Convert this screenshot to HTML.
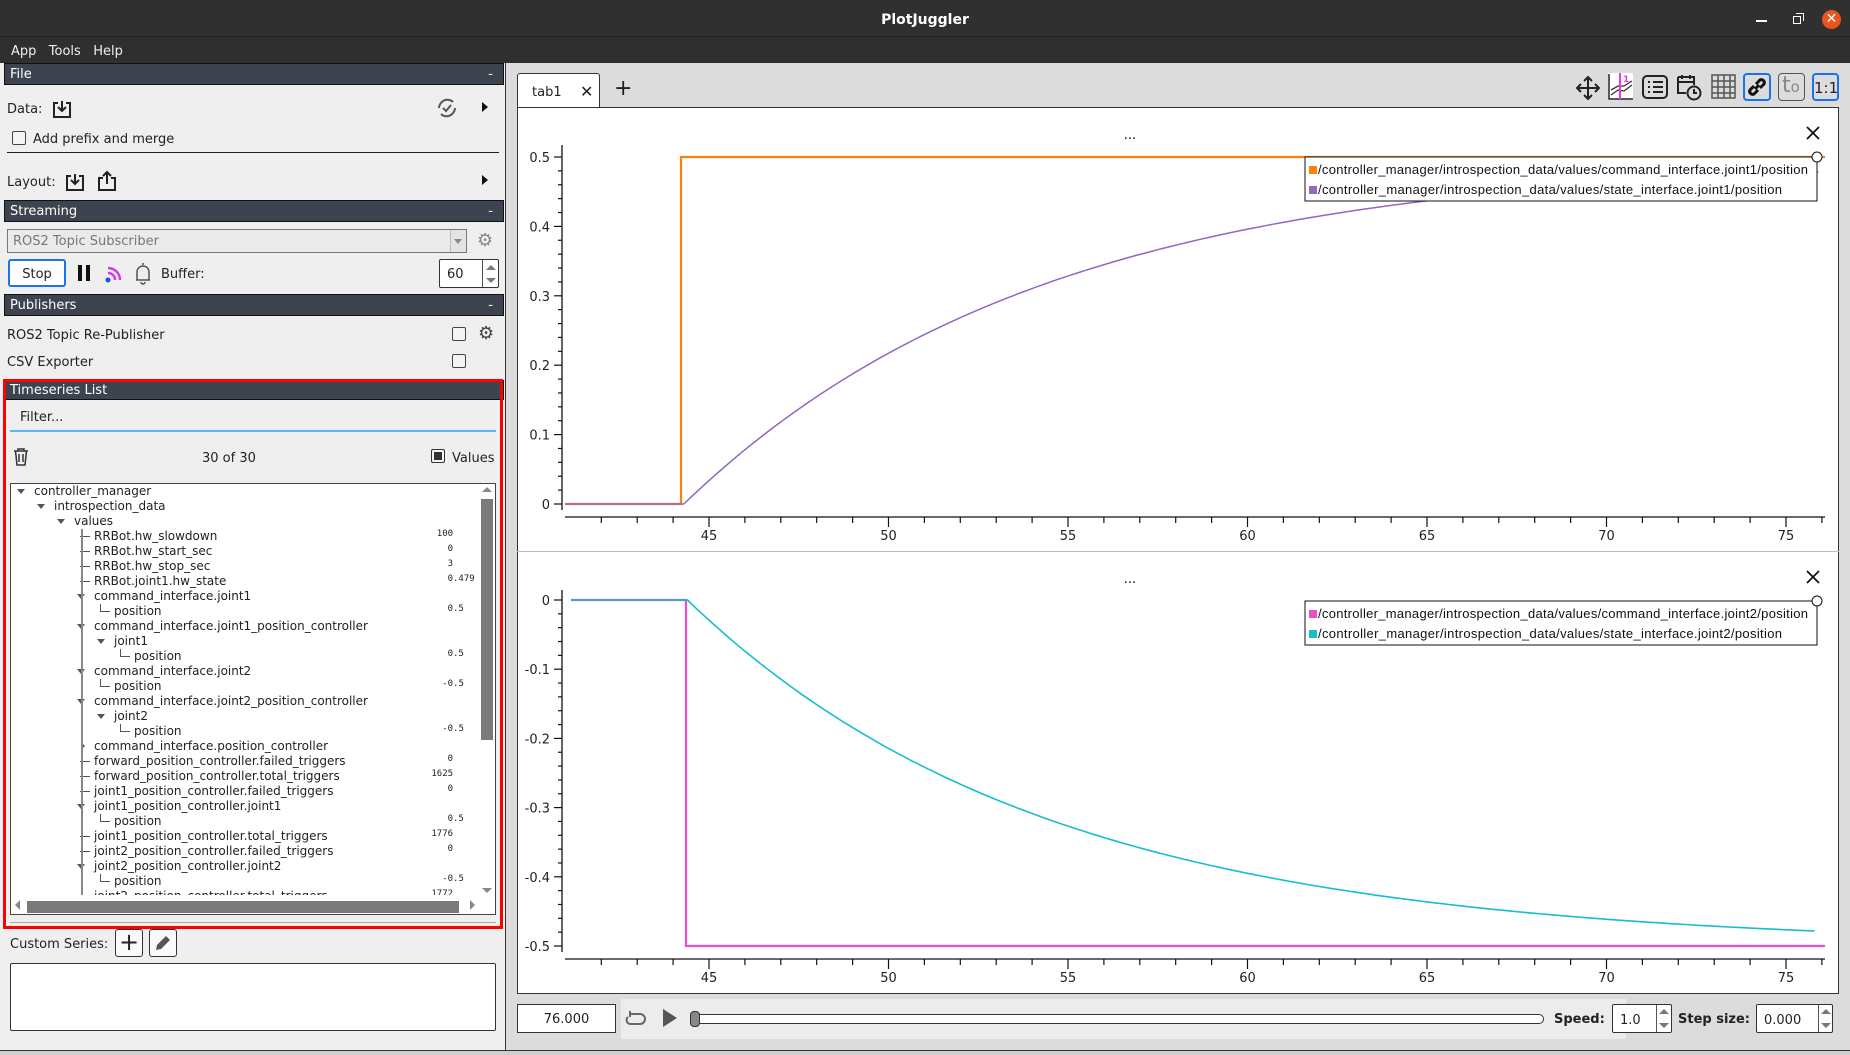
<!DOCTYPE html>
<html><head><meta charset="utf-8">
<style>
*{margin:0;padding:0;box-sizing:border-box}
body{width:1850px;height:1055px;overflow:hidden;position:relative;background:#dcdcdc;font-family:"DejaVu Sans","Liberation Sans",sans-serif;font-size:13px;color:#222}
.a{position:absolute}
.hdr{position:absolute;left:4px;width:500px;height:22px;background:#3d4450;color:#fff;border:1px solid #111;font-size:13px;line-height:22px;padding-left:5px}
.hdr span{position:absolute;right:10px;top:0}
.cb{position:absolute;width:14px;height:14px;border:1px solid #444;border-radius:2px;background:#f4f4f4}
.t{position:absolute;font-size:12px;white-space:nowrap;line-height:15px}
.v{position:absolute;font-family:"DejaVu Sans Mono",monospace;font-size:9px;line-height:15px;color:#222}
</style></head><body>
<!-- title bar -->
<div class="a" style="left:0;top:0;width:1850px;height:37px;background:#303030;border-bottom:1px solid #222"></div>
<div class="a" style="left:0;top:12px;width:1850px;text-align:center;color:#fff;font-weight:bold;font-size:14px">PlotJuggler</div>
<div class="a" style="left:1756px;top:20px;width:11px;height:2px;background:#fff"></div>
<div class="a" style="left:1793px;top:16px;width:8px;height:8px;border:1.5px solid #fff"></div>
<div class="a" style="left:1796px;top:13px;width:8px;height:8px;border-top:1.5px solid #fff;border-right:1.5px solid #fff"></div>
<div class="a" style="left:1822px;top:10px;width:19px;height:19px;border-radius:50%;background:#e95420;color:#fff;font-size:14px;line-height:19px;text-align:center;font-weight:bold">✕</div>
<!-- menu -->
<div class="a" style="left:0;top:37px;width:1850px;height:26px;background:#2f2f2f"></div>
<div class="a" style="left:11px;top:44px;color:#eee;font-size:13px;word-spacing:0">App&nbsp;&nbsp;&nbsp;Tools&nbsp;&nbsp;&nbsp;Help</div>
<!-- left panel -->
<div class="a" style="left:0;top:63px;width:506px;height:992px;background:#efefef;border-right:1px solid #333"></div>
<div class="hdr" style="top:63px">File<span>-</span></div>
<div class="a" style="left:7px;top:102px">Data:</div>
<svg class="a" style="left:52px;top:99px" width="20" height="20" viewBox="0 0 20 20" fill="none" stroke="#222" stroke-width="2"><path d="M6 4H2v14h16V4h-4M10 2v10M6 8l4 4 4-4"/></svg>
<svg class="a" style="left:436px;top:97px" width="22" height="22" viewBox="0 0 22 22" fill="none" stroke="#555" stroke-width="2"><path d="M5 6a8 8 0 0 1 12-1M17 16a8 8 0 0 1-12 1M3 11a8 8 0 0 1 2-5M19 11a8 8 0 0 1-2 5M7 11l3 3 5-6"/></svg>
<div class="a" style="left:482px;top:102px;width:0;height:0;border-left:6px solid #111;border-top:5px solid transparent;border-bottom:5px solid transparent"></div>
<div class="cb" style="left:12px;top:131px"></div>
<div class="a" style="left:33px;top:132px">Add prefix and merge</div>
<div class="a" style="left:7px;top:152px;width:492px;height:1px;background:#222"></div>
<div class="a" style="left:7px;top:175px">Layout:</div>
<svg class="a" style="left:65px;top:172px" width="20" height="20" viewBox="0 0 20 20" fill="none" stroke="#222" stroke-width="2"><path d="M6 4H2v14h16V4h-4M10 2v10M6 8l4 4 4-4"/></svg>
<svg class="a" style="left:97px;top:170px" width="20" height="22" viewBox="0 0 20 22" fill="none" stroke="#222" stroke-width="2"><path d="M6 8H2v12h16V8h-4M10 14V2M6 6l4-4 4 4"/></svg>
<div class="a" style="left:482px;top:175px;width:0;height:0;border-left:6px solid #111;border-top:5px solid transparent;border-bottom:5px solid transparent"></div>
<div class="hdr" style="top:200px">Streaming<span>-</span></div>
<div class="a" style="left:7px;top:229px;width:460px;height:24px;border:1px solid #777;background:#eaeaea;color:#777;padding-left:5px;line-height:24px">ROS2 Topic Subscriber</div>
<div class="a" style="left:450px;top:230px;width:16px;height:22px;border-left:1px solid #bbb;background:#e4e4e4"></div>
<div class="a" style="left:454px;top:239px;border-top:5px solid #888;border-left:4px solid transparent;border-right:4px solid transparent"></div>
<div class="a" style="left:477px;top:230px;color:#888;font-size:18px">⚙</div>
<div class="a" style="left:8px;top:259px;width:58px;height:28px;border:2px solid #1a73e8;border-radius:3px;background:#fff;text-align:center;line-height:27px">Stop</div>
<div class="a" style="left:78px;top:265px;width:4px;height:16px;background:#111"></div>
<div class="a" style="left:86px;top:265px;width:4px;height:16px;background:#111"></div>
<svg class="a" style="left:104px;top:262px" width="20" height="22" viewBox="0 0 20 22" fill="none"><circle cx="4" cy="18" r="2.5" fill="#1a4fe8"/><path d="M4 11a7 7 0 0 1 7 7M4 6a12 12 0 0 1 12 12" stroke="#d63ae8" stroke-width="2.5"/></svg>
<svg class="a" style="left:134px;top:261px" width="18" height="24" viewBox="0 0 18 24" fill="none" stroke="#555" stroke-width="1.5"><path d="M3 19V11a6 6 0 0 1 12 0v8H2h14M9 4V2M7 21a2 2 0 0 0 4 0"/></svg>
<div class="a" style="left:161px;top:267px">Buffer:</div>
<div class="a" style="left:439px;top:259px;width:60px;height:29px;border:1px solid #333;background:#fff;border-radius:2px;padding-left:7px;line-height:30px">60</div>
<div class="a" style="left:482px;top:260px;width:1px;height:27px;background:#555"></div>
<div class="a" style="left:486px;top:265px;border-bottom:5px solid #777;border-left:5px solid transparent;border-right:5px solid transparent"></div>
<div class="a" style="left:486px;top:278px;border-top:5px solid #777;border-left:5px solid transparent;border-right:5px solid transparent"></div>
<div class="hdr" style="top:294px">Publishers<span>-</span></div>
<div class="a" style="left:7px;top:328px">ROS2 Topic Re-Publisher</div>
<div class="cb" style="left:452px;top:327px"></div>
<div class="a" style="left:478px;top:323px;color:#444;font-size:18px">⚙</div>
<div class="a" style="left:7px;top:355px">CSV Exporter</div>
<div class="cb" style="left:452px;top:354px"></div>
<div class="hdr" style="top:380px;height:20px;line-height:20px">Timeseries List</div>
<div class="a" style="left:20px;top:410px">Filter...</div>
<div class="a" style="left:10px;top:430px;width:486px;height:2px;background:#5ab8f0"></div>
<svg class="a" style="left:13px;top:448px" width="16" height="18" viewBox="0 0 16 18" fill="none" stroke="#333" stroke-width="1.5"><path d="M1 3h14M5 3V1h6v2M2.5 3l1.5 14h8l1.5-14M6 6v8M10 6v8"/></svg>
<div class="a" style="left:202px;top:451px">30 of 30</div>
<div class="cb" style="left:431px;top:449px;border-color:#333"><div style="margin:2px;width:8px;height:8px;background:#333"></div></div>
<div class="a" style="left:452px;top:451px">Values</div>
<div class="a" style="left:10px;top:483px;width:486px;height:412px;background:#fff;border:1px solid #444;border-bottom:none"></div>
<div class="a" style="left:10px;top:895px;width:486px;height:20px;background:#fff;border:1px solid #444;border-top:none"></div>
<div class="a" style="left:482px;top:487px;border-bottom:5px solid #888;border-left:5px solid transparent;border-right:5px solid transparent"></div>
<div class="a" style="left:481px;top:499px;width:12px;height:241px;background:#7a7a7a"></div>
<div class="a" style="left:482px;top:888px;border-top:5px solid #888;border-left:5px solid transparent;border-right:5px solid transparent"></div>
<div class="a" style="left:15px;top:900px;border-right:5px solid #888;border-top:5px solid transparent;border-bottom:5px solid transparent"></div>
<div class="a" style="left:27px;top:901px;width:432px;height:12px;background:#7a7a7a"></div>
<div class="a" style="left:470px;top:900px;border-left:5px solid #888;border-top:5px solid transparent;border-bottom:5px solid transparent"></div>
<div id="tree"></div>
<div class="a" style="left:10px;top:922px;width:486px;height:1px;background:#aaa"></div>
<div class="a" style="left:3px;top:379px;width:500px;height:550px;border:3px solid #f00"></div>
<div class="a" style="left:10px;top:937px">Custom Series:</div>
<div class="a" style="left:115px;top:929px;width:28px;height:28px;border:1px solid #333;border-radius:3px;background:#fafafa;font-size:24px;line-height:24px;text-align:center">+</div>
<div class="a" style="left:149px;top:929px;width:28px;height:28px;border:1px solid #333;border-radius:3px;background:#fafafa"></div>
<svg class="a" style="left:153px;top:933px" width="20" height="20" viewBox="0 0 20 20"><path d="M3 17l1-5 9-9 4 4-9 9z" fill="#555"/></svg>
<div class="a" style="left:10px;top:963px;width:486px;height:68px;background:#fff;border:1px solid #333;border-radius:2px"></div>

<!-- right panel -->
<div class="a" style="left:517px;top:73px;width:83px;height:36px;background:#fff;border:1px solid #333;border-bottom:none;border-radius:3px 3px 0 0"></div>
<div class="a" style="left:532px;top:85px;font-size:13px">tab1</div>
<div class="a" style="left:580px;top:82px;font-size:16px">✕</div>
<div class="a" style="left:614px;top:76px;font-size:22px">+</div>
<div class="a" style="left:517px;top:107px;width:1322px;height:887px;background:#fff;border:1px solid #333"></div>
<div class="a" style="left:517px;top:551px;width:1322px;height:1px;background:#bbb"></div>
<!-- toolbar -->
<svg class="a" style="left:1574px;top:74px" width="28" height="28" viewBox="0 0 28 28" fill="none" stroke="#222" stroke-width="2"><path d="M14 3v22M3 14h22M10 7l4-4 4 4M10 21l4 4 4-4M7 10l-4 4 4 4M21 10l4 4-4 4"/></svg>
<div class="a" style="left:1608px;top:73px;width:25px;height:27px;background:#fff"></div>
<svg class="a" style="left:1608px;top:73px" width="25" height="27" viewBox="0 0 25 27" fill="none"><path d="M1 1v25h24" stroke="#222" stroke-width="1.5"/><path d="M3 22l7-5 6 1 8-6M3 17l7-4 6 0 8-5" stroke="#333" stroke-width="1.3"/><path d="M12 0v26" stroke="#e83ae8" stroke-width="2"/><text x="15" y="9" font-size="9" font-weight="bold" fill="#e83ae8" font-family="DejaVu Sans">1</text></svg>
<svg class="a" style="left:1642px;top:75px" width="26" height="24" viewBox="0 0 26 24" fill="none" stroke="#222" stroke-width="2"><rect x="1" y="1" width="24" height="22" rx="4"/><path d="M6 7h2M11 7h10M6 12h2M11 12h10M6 17h2M11 17h10"/></svg>
<svg class="a" style="left:1676px;top:73px" width="26" height="28" viewBox="0 0 26 28" fill="none" stroke="#222" stroke-width="2"><path d="M2 4h16v8M2 4v16h8M2 9h16M6 2v4M14 2v4"/><circle cx="18" cy="20" r="6.5"/><path d="M18 16v4h3"/></svg>
<svg class="a" style="left:1711px;top:74px" width="25" height="25" viewBox="0 0 25 25" fill="none" stroke="#555" stroke-width="1.5"><path d="M1 1h23v23H1zM1 7h23M1 13h23M1 19h23M7 1v23M13 1v23M19 1v23"/></svg>
<div class="a" style="left:1743px;top:73px;width:28px;height:28px;border:2px solid #1a73e8;border-radius:4px"></div>
<svg class="a" style="left:1746px;top:76px" width="22" height="22" viewBox="0 0 22 22" fill="none" stroke="#111" stroke-width="3"><path d="M9 13l4-4M8 10l-4 4a3 3 0 0 0 4 4l4-4M14 12l4-4a3 3 0 0 0-4-4l-4 4"/></svg>
<div class="a" style="left:1778px;top:73px;width:27px;height:28px;border:1px solid #555;border-radius:4px;color:#888;font-size:22px;line-height:24px;padding-left:3px">t<span style="font-size:15px">o</span></div>
<div class="a" style="left:1812px;top:73px;width:27px;height:28px;border:2px solid #1a73e8;border-radius:4px;font-size:15px;line-height:26px;text-align:center">1:1</div>

<svg class="a" style="left:0;top:0" width="1850" height="1055" id="plots" font-family="DejaVu Sans" font-size="13">
<text x="1130" y="139" font-size="13" text-anchor="middle">...</text>
<text x="1130" y="583" font-size="13" text-anchor="middle">...</text>
<path d="M1807 127l12 12M1819 127l-12 12M1807 571l12 12M1819 571l-12 12" stroke="#111" stroke-width="1.8"/>
</svg>

<!-- bottom bar -->
<div class="a" style="left:517px;top:1004px;width:99px;height:29px;border:1px solid #333;background:#fff;text-align:center;line-height:29px">76.000</div>
<div class="a" style="left:621px;top:999px;width:1005px;height:40px;background:#ececec"></div>
<svg class="a" style="left:624px;top:1008px" width="22" height="22" viewBox="0 0 22 22" fill="none" stroke="#666" stroke-width="2"><path d="M6 6h10a4 4 0 0 1 0 10H6a4 4 0 0 1-2-7M6 3v6h0"/></svg>
<div class="a" style="left:663px;top:1009px;border-left:14px solid #555;border-top:9px solid transparent;border-bottom:9px solid transparent"></div>
<div class="a" style="left:690px;top:1014px;width:854px;height:10px;border:1px solid #333;border-radius:5px;background:#fff"></div>
<div class="a" style="left:690px;top:1011px;width:10px;height:16px;border:1px solid #333;border-radius:4px;background:#888"></div>
<div class="a" style="left:1554px;top:1012px;font-weight:bold">Speed:</div>
<div class="a" style="left:1612px;top:1004px;width:60px;height:29px;border:1px solid #333;background:#fff;border-radius:2px;padding-left:7px;line-height:31px">1.0</div>
<div class="a" style="left:1656px;top:1005px;width:1px;height:27px;background:#555"></div>
<div class="a" style="left:1659px;top:1009px;border-bottom:5px solid #777;border-left:5px solid transparent;border-right:5px solid transparent"></div>
<div class="a" style="left:1659px;top:1023px;border-top:5px solid #777;border-left:5px solid transparent;border-right:5px solid transparent"></div>
<div class="a" style="left:1678px;top:1012px;font-weight:bold">Step size:</div>
<div class="a" style="left:1756px;top:1004px;width:77px;height:29px;border:1px solid #333;background:#fff;border-radius:2px;padding-left:7px;line-height:31px">0.000</div>
<div class="a" style="left:1818px;top:1005px;width:1px;height:27px;background:#555"></div>
<div class="a" style="left:1821px;top:1009px;border-bottom:5px solid #777;border-left:5px solid transparent;border-right:5px solid transparent"></div>
<div class="a" style="left:1821px;top:1023px;border-top:5px solid #777;border-left:5px solid transparent;border-right:5px solid transparent"></div>
<div class="a" style="left:0;top:1050px;width:1850px;height:5px;background:#cfcfcf;border-top:1px solid #333"></div>

<script>
var rows=[
[0,'a','controller_manager'],[1,'a','introspection_data'],[2,'a','values'],
[3,'l','RRBot.hw_slowdown','100'],[3,'l','RRBot.hw_start_sec','0'],[3,'l','RRBot.hw_stop_sec','3'],[3,'l','RRBot.joint1.hw_state','0.479'],
[3,'a','command_interface.joint1'],[4,'p','position','0.5'],
[3,'a','command_interface.joint1_position_controller'],[4,'a','joint1'],[5,'p','position','0.5'],
[3,'a','command_interface.joint2'],[4,'p','position','-0.5'],
[3,'a','command_interface.joint2_position_controller'],[4,'a','joint2'],[5,'p','position','-0.5'],
[3,'r','command_interface.position_controller'],
[3,'l','forward_position_controller.failed_triggers','0'],[3,'l','forward_position_controller.total_triggers','1625'],
[3,'l','joint1_position_controller.failed_triggers','0'],[3,'a','joint1_position_controller.joint1'],[4,'p','position','0.5'],
[3,'l','joint1_position_controller.total_triggers','1776'],[3,'l','joint2_position_controller.failed_triggers','0'],
[3,'a','joint2_position_controller.joint2'],[4,'p','position','-0.5'],[3,'l','joint2_position_controller.total_triggers','1772']];
var tx=[34,54,74,94,114,134],h='';
var wrap='<div class="a" style="left:11px;top:484px;width:469px;height:411px;overflow:hidden">';
rows.forEach(function(r,i){
 var y=491+15*i-7-484, L=r[0], x=tx[L]-11;
 if(r[1]=='a') h+='<div class="a" style="left:'+(x-17)+'px;top:'+(y+5)+'px;border-top:5px solid #555;border-left:4px solid transparent;border-right:4px solid transparent"></div>';
 if(r[1]=='r') h+='<div class="a" style="left:'+(x-13)+'px;top:'+(y+3)+'px;border-left:4px solid #555;border-top:4px solid transparent;border-bottom:4px solid transparent"></div>';
 if(r[1]=='l') h+='<div class="a" style="left:'+(x-14)+'px;top:'+(y+7)+'px;width:10px;height:1px;background:#555"></div>';
 if(r[1]=='p') h+='<div class="a" style="left:'+(x-14)+'px;top:'+(y)+'px;width:10px;height:8px;border-left:1px solid #555;border-bottom:1px solid #555"></div>';
 if(i>=3) h+='<div class="a" style="left:70px;top:'+y+'px;width:1.5px;height:15px;background:#888"></div>';
 h+='<div class="t" style="left:'+x+'px;top:'+y+'px">'+r[2]+'</div>';
 if(r[3]){var v=r[3],left;
  if(v.indexOf('.')<0) left=453-11-v.length*5.4; else {var ip=v.split('.')[0]; left=453-11-ip.length*5.4;}
  h+='<div class="v" style="left:'+left+'px;top:'+(y-2)+'px">'+v+'</div>';}
});
document.getElementById('tree').innerHTML=wrap+h+'</div>';

var s=document.getElementById('plots'),o='';
function X(t){return 709+(t-45)*35.9;}
function axes(y0,ylab,yax,Yf,vals,minorFrom,minorTo,ymin){
 o+='<path d="M562 '+ymin+'V'+(yax-7)+'M565 '+yax+'H1825" stroke="#111" stroke-width="1.3" fill="none"/>';
 for(var t=42;t<=76;t++){var x=X(t),maj=(t%5==0);o+='<path d="M'+x+' '+yax+'v'+(maj?10:6)+'" stroke="#111" stroke-width="1.2"/>';
  if(maj&&t<=75)o+='<text x="'+x+'" y="'+(yax+23)+'" text-anchor="middle" fill="#222">'+t+'</text>';}
 for(var k=minorFrom;k<=minorTo;k++){var v=k*0.02,y=Yf(v),maj=(k%5==0);o+='<path d="M562 '+y+'h-'+(maj?8:4)+'" stroke="#111" stroke-width="1.2"/>';
  if(maj)o+='<text x="550" y="'+(y+5)+'" text-anchor="end" fill="#222">'+(Math.round(v*10)/10==0?'0':(Math.round(v*10)/10).toString())+'</text>';}
}
var Yt=function(v){return 504-v*694;}, Yb=function(v){return 600-v*692;};
axes(0,0,517,Yt,0,0,25,145);
axes(0,0,959,Yb,0,-25,0,590);
o+='<path d="M565 '+Yt(0)+'H681V'+Yt(0.5)+'H1825" stroke="#ff7f0e" stroke-width="2.2" fill="none"/>';
var p='M565 '+Yt(0)+'L684 '+Yt(0);for(var t=44.3;t<=76;t+=0.2){p+='L'+X(t).toFixed(1)+' '+Yt(0.5*(1-Math.exp(-(t-44.3)/10))).toFixed(1);}
o+='<path d="'+p+'" stroke="#9467bd" stroke-width="1.5" fill="none"/>';
o+='<path d="M571 '+Yb(0)+'H686V'+Yb(-0.5)+'H1825" stroke="#e94fcb" stroke-width="2.2" fill="none"/>';
p='M571 '+Yb(0)+'L688 '+Yb(0);for(var t=44.4;t<=76;t+=0.2){p+='L'+X(t).toFixed(1)+' '+Yb(-0.5*(1-Math.exp(-(t-44.4)/10))).toFixed(1);}
o+='<path d="'+p+'" stroke="#17becf" stroke-width="1.6" fill="none"/>';
function leg(y,c1,t1,c2,t2){
 o+='<rect x="1305" y="'+y+'" width="512" height="44" fill="#fff" stroke="#111"/>';
 o+='<rect x="1309" y="'+(y+9)+'" width="8" height="8" fill="'+c1+'"/><text x="1318" y="'+(y+17)+'" font-family="Liberation Sans" font-size="13" textLength="490" fill="#111">'+t1+'</text>';
 o+='<rect x="1309" y="'+(y+29)+'" width="8" height="8" fill="'+c2+'"/><text x="1318" y="'+(y+37)+'" font-family="Liberation Sans" font-size="13" textLength="464" fill="#111">'+t2+'</text>';
 o+='<circle cx="1817" cy="'+y+'" r="5" fill="#fff" stroke="#111"/>';
}
leg(157,'#ff7f0e','/controller_manager/introspection_data/values/command_interface.joint1/position','#9467bd','/controller_manager/introspection_data/values/state_interface.joint1/position');
leg(601,'#e94fcb','/controller_manager/introspection_data/values/command_interface.joint2/position','#17becf','/controller_manager/introspection_data/values/state_interface.joint2/position');
s.insertAdjacentHTML('beforeend',o);
</script>
</body></html>
